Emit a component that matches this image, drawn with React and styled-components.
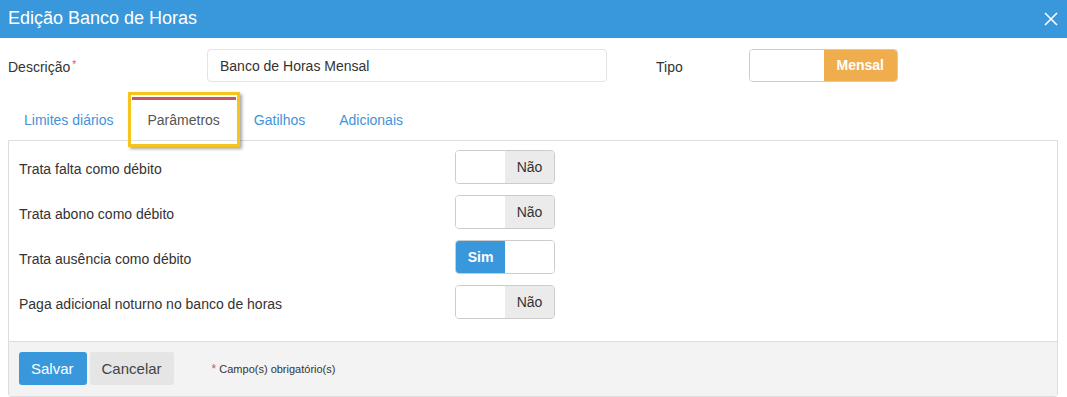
import React, { useState } from "react";
import styled, { createGlobalStyle } from "styled-components";

const GlobalStyle = createGlobalStyle`
  body {
    margin: 0;
    background: #fff;
    font-family: "Liberation Sans", Arial, sans-serif;
    color: #333;
  }
`;

const params = [
  { label: "Trata falta como débito", value: false },
  { label: "Trata abono como débito", value: false },
  { label: "Trata ausência como débito", value: true },
  { label: "Paga adicional noturno no banco de horas", value: false },
];

const tabs = ["Limites diários", "Parâmetros", "Gatilhos", "Adicionais"];

const App = () => {
  const [active] = useState(1);

  return (
    <>
      <GlobalStyle />
      <Modal>
        <Header>
          <h1>Edição Banco de Horas</h1>
          <Close>
            <svg width="14" height="14" viewBox="0 0 14 14">
              <path d="M1 1L13 13M13 1L1 13" stroke="#fff" strokeWidth="1.6" />
            </svg>
          </Close>
        </Header>

        <FormRow>
          <Label $width={199}>
            Descrição<Req>*</Req>
          </Label>
          <Input defaultValue="Banco de Horas Mensal" />
          <Label $width={93} $pad={49}>
            Tipo
          </Label>
          <Switch $width={149} $height={33}>
            <Half />
            <Half $on $color="#f0ad4e">Mensal</Half>
          </Switch>
        </FormRow>

        <Tabs>
          {tabs.map((t, i) => (
            <Tab key={t} $active={i === active}>
              {t}
            </Tab>
          ))}
        </Tabs>

        <Panel>
          <Rows>
            {params.map((p) => (
              <ParamRow key={p.label}>
                <ParamLabel>{p.label}</ParamLabel>
                <Switch $width={100} $height={34}>
                  {p.value ? (
                    <>
                      <Half $on $color="#3898db">Sim</Half>
                      <Half />
                    </>
                  ) : (
                    <>
                      <Half />
                      <Half $off>Não</Half>
                    </>
                  )}
                </Switch>
              </ParamRow>
            ))}
          </Rows>
          <Footer>
            <Button $primary>Salvar</Button>
            <Button>Cancelar</Button>
            <Note>
              <Req>*</Req> Campo(s) obrigatório(s)
            </Note>
          </Footer>
        </Panel>
      </Modal>
    </>
  );
};

export default App;

const Modal = styled.div`
  width: 1067px;
  height: 397px;
  background: #fff;
`;

const Header = styled.div`
  height: 38px;
  background: #3898db;
  display: flex;
  align-items: center;
  justify-content: space-between;
  padding: 0 8px 0 8px;
  h1 {
    margin: 0;
    color: #fff;
    font-size: 18px;
    font-weight: normal;
    padding-bottom: 2px;
  }
`;

const Close = styled.span`
  display: flex;
  margin-right: 1px;
`;

const FormRow = styled.div`
  display: flex;
  align-items: center;
  padding: 11px 0 0 8px;
  height: 33px;
`;

const Label = styled.div`
  width: ${(p) => p.$width}px;
  padding-left: ${(p) => p.$pad || 0}px;
  font-size: 14px;
  color: #333;
  padding-top: 3px;
`;

const Req = styled.span`
  color: #d9534f;
  font-size: 10px;
  vertical-align: top;
  margin-left: 2px;
`;

const Input = styled.input`
  box-sizing: border-box;
  width: 400px;
  height: 33px;
  border: 1px solid #e3e3e3;
  border-radius: 4px;
  padding: 0 12px;
  font-family: inherit;
  font-size: 14px;
  color: #333;
  outline: none;
`;

const Switch = styled.div`
  box-sizing: border-box;
  display: flex;
  width: ${(p) => p.$width}px;
  height: ${(p) => p.$height}px;
  border: 1px solid #ccc;
  border-radius: 4px;
  overflow: hidden;
  margin-top: -1px;
`;

const Half = styled.div`
  flex: 1;
  display: flex;
  align-items: center;
  justify-content: center;
  font-size: 14px;
  background: ${(p) => (p.$on ? p.$color : p.$off ? "#ebebeb" : "#fff")};
  color: ${(p) => (p.$on ? "#fff" : "#333")};
  font-weight: ${(p) => (p.$on ? "bold" : "normal")};
`;

const Tabs = styled.div`
  display: flex;
  margin: 15px 0 0 9px;
  height: 43px;
`;

const Tab = styled.div`
  position: relative;
  box-sizing: border-box;
  height: 43px;
  padding: 0 16px 0 15px;
  margin-right: 3px;
  display: flex;
  align-items: center;
  font-size: 14px;
  color: ${(p) => (p.$active ? "#555" : "#4393da")};
  background: ${(p) => (p.$active ? "#fff" : "transparent")};
  border-top: 3px solid ${(p) => (p.$active ? "#c9575a" : "transparent")};
  z-index: ${(p) => (p.$active ? 1 : 0)};
  &::after {
    content: "";
    display: ${(p) => (p.$active ? "block" : "none")};
    position: absolute;
    left: -4px;
    right: -4px;
    top: -8px;
    bottom: -7px;
    border: 3px solid #f4c51a;
    box-shadow: 2px 2px 3px rgba(0, 0, 0, 0.35);
  }
`;

const Panel = styled.div`
  margin: 0 9px 0 8px;
  border: 1px solid #ddd;
  border-radius: 0 0 3px 3px;
  height: 257px;
  display: flex;
  flex-direction: column;
  box-sizing: border-box;
`;

const Rows = styled.div`
  flex: 1;
  padding: 9px 10px 0 10px;
  display: flex;
  flex-direction: column;
  gap: 11px;
`;

const ParamRow = styled.div`
  display: flex;
  align-items: center;
  height: 34px;
`;

const ParamLabel = styled.div`
  width: 436px;
  font-size: 14px;
  color: #333;
  padding-top: 4px;
`;

const Footer = styled.div`
  background: #f3f3f3;
  border-top: 1px solid #ddd;
  height: 55px;
  box-sizing: border-box;
  padding: 10px 10px;
  display: flex;
  align-items: flex-start;
  gap: 3px;
`;

const Button = styled.button`
  height: 33px;
  padding: ${(p) => (p.$primary ? "0 13px 0 12px" : "0 12px")};
  border: none;
  border-radius: 3px;
  font-family: inherit;
  font-size: 15px;
  background: ${(p) => (p.$primary ? "#3898db" : "#e5e5e5")};
  color: ${(p) => (p.$primary ? "#fff" : "#444")};
`;

const Note = styled.div`
  margin-left: 33px;
  align-self: center;
  font-size: 11px;
  color: #333;
  ${Req} {
    vertical-align: baseline;
    font-size: 12px;
  }
`;
